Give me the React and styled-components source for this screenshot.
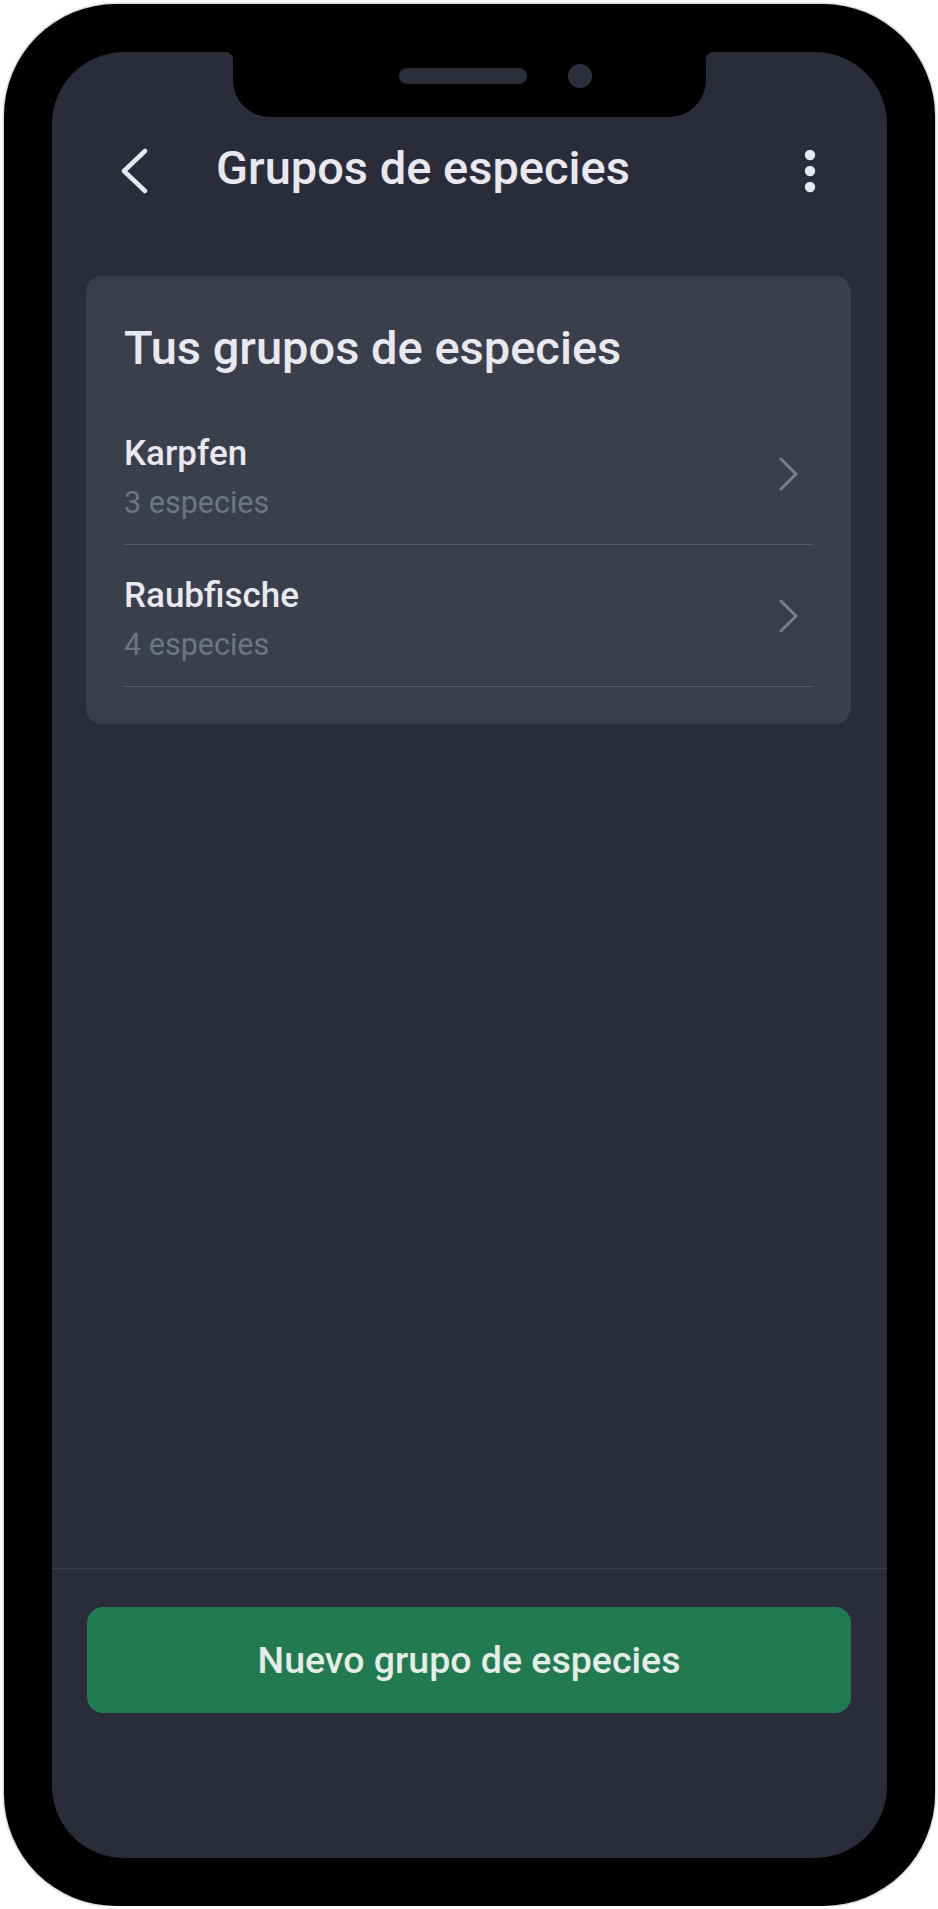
import styled, { createGlobalStyle } from "styled-components";

const GlobalStyle = createGlobalStyle`
  html,
  body {
    margin: 0;
    padding: 0;
    background: #ffffff;
  }

  * {
    box-sizing: border-box;
  }
`;

const Phone = styled.div`
  width: 931px;
  margin: 4px 0 0 4px;
  padding: 48px;
  border-radius: 112px;
  background: #000;
  box-shadow: 0 0 2px 1px rgba(0, 0, 0, 0.22);
`;

const Screen = styled.div`
  position: relative;
  display: flex;
  flex-direction: column;
  height: 1806px;
  border-radius: 72px;
  overflow: hidden;
  background: #2a2d39;
  font-family: Roboto, "Noto Sans", sans-serif;
  color: #e8e9ef;
`;

const Notch = styled.div`
  position: absolute;
  top: 0;
  left: 181px;
  width: 473px;
  height: 65px;
  display: flex;
  align-items: flex-start;
  gap: 41px;
  padding: 12px 0 0 166px;
  background: #000;
  border-radius: 0 0 37px 37px;

  &::before,
  &::after {
    content: "";
    position: absolute;
    top: 0;
    width: 8px;
    height: 8px;
  }
  &::before {
    left: -8px;
    background: radial-gradient(circle at 0 100%, transparent 8px, #000 8.5px);
  }
  &::after {
    right: -8px;
    background: radial-gradient(circle at 100% 100%, transparent 8px, #000 8.5px);
  }
`;

const Speaker = styled.span`
  width: 128px;
  height: 16px;
  margin-top: 4px;
  border-radius: 8px;
  background: #2c2f3b;
`;

const Camera = styled.span`
  width: 24px;
  height: 24px;
  border-radius: 50%;
  background: #2c2f3b;
`;

const Header = styled.header`
  display: flex;
  align-items: center;
  height: 80px;
  margin-top: 79px;
  padding: 0 70px 0 68px;
`;

const IconButton = styled.button`
  display: flex;
  align-items: center;
  justify-content: center;
  padding: 0;
  border: none;
  background: none;
  color: #e6e8f0;
`;

const Title = styled.h1`
  flex: 1;
  margin: 0 0 7px 64px;
  font-size: 47px;
  font-weight: 500;
  line-height: 56px;
`;

const Content = styled.main`
  flex: 1;
  padding: 65px 36px 0 34px;
`;

const Card = styled.section`
  padding: 44px 38px 37px;
  border-radius: 16px;
  background: #3a3f4b;
`;

const CardTitle = styled.h2`
  margin: 0 0 27px;
  font-size: 47px;
  font-weight: 500;
  line-height: 56px;
`;

const GroupList = styled.ul`
  margin: 0;
  padding: 0;
  list-style: none;
`;

const GroupRow = styled.li`
  display: flex;
  align-items: center;
  justify-content: space-between;
  padding: 31px 14px 23px 0;
  border-bottom: 1px solid #555a66;

  & > svg {
    margin-bottom: 7px;
  }
`;

const GroupText = styled.div`
  display: flex;
  flex-direction: column;
  gap: 11px;
`;

const GroupName = styled.span`
  font-size: 35px;
  font-weight: 500;
  line-height: 40px;
`;

const GroupCount = styled.span`
  color: #6f7583;
  font-size: 30.5px;
  font-weight: 400;
  line-height: 36px;
`;

const Footer = styled.footer`
  padding: 38px 36px 145px 35px;
  border-top: 1px solid #3b3f4b;
`;

const PrimaryButton = styled.button`
  width: 100%;
  height: 106px;
  border: none;
  border-radius: 16px;
  background: #217a50;
  color: #e6ece8;
  font-family: Roboto, "Noto Sans", sans-serif;
  font-size: 37.5px;
  font-weight: 500;
`;

function BackIcon() {
  return (
    <svg width="32" height="46" viewBox="0 0 32 46" fill="none">
      <path
        d="M25 3 L4 23 L25 43"
        stroke="currentColor"
        strokeWidth="4.5"
        strokeLinecap="round"
        strokeLinejoin="round"
      />
    </svg>
  );
}

function MoreIcon() {
  return (
    <svg width="14" height="46" viewBox="0 0 14 46" fill="currentColor">
      <circle cx="7" cy="7" r="5.2" />
      <circle cx="7" cy="23" r="5.2" />
      <circle cx="7" cy="39" r="5.2" />
    </svg>
  );
}

function ChevronRight() {
  return (
    <svg width="21" height="34" viewBox="0 0 21 34" fill="none">
      <path
        d="M3 2 L18 17 L3 32"
        stroke="#777d8a"
        strokeWidth="3"
        strokeLinecap="round"
        strokeLinejoin="round"
      />
    </svg>
  );
}

const groups = [
  { name: "Karpfen", count: 3 },
  { name: "Raubfische", count: 4 },
];

export default function App() {
  return (
    <>
      <GlobalStyle />
      <Phone>
        <Screen>
          <Notch>
            <Speaker />
            <Camera />
          </Notch>

          <Header>
            <IconButton aria-label="Atrás">
              <BackIcon />
            </IconButton>
            <Title>Grupos de especies</Title>
            <IconButton aria-label="Más opciones">
              <MoreIcon />
            </IconButton>
          </Header>

          <Content>
            <Card>
              <CardTitle>Tus grupos de especies</CardTitle>
              <GroupList>
                {groups.map((g) => (
                  <GroupRow key={g.name}>
                    <GroupText>
                      <GroupName>{g.name}</GroupName>
                      <GroupCount>{g.count} especies</GroupCount>
                    </GroupText>
                    <ChevronRight />
                  </GroupRow>
                ))}
              </GroupList>
            </Card>
          </Content>

          <Footer>
            <PrimaryButton>Nuevo grupo de especies</PrimaryButton>
          </Footer>
        </Screen>
      </Phone>
    </>
  );
}
